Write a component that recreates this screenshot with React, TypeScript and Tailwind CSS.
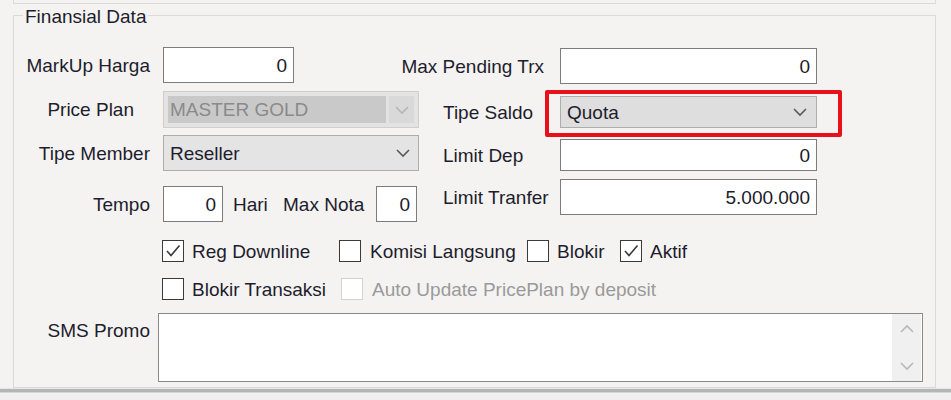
import React from "react";

const Chevron = ({ color = "#5a5a5a", up = false }: { color?: string; up?: boolean }) => (
  <svg width="16" height="10" viewBox="0 0 16 10" fill="none">
    <polyline
      points={up ? "2,8 8,2 14,8" : "2,2 8,8 14,2"}
      stroke={color}
      strokeWidth="1.6"
      fill="none"
    />
  </svg>
);

const Input = ({ w, h = 36, value }: { w: string; h?: number; value: string }) => (
  <div
    className={`${w} bg-white border-[1.5px] border-[#7c7c7c] flex items-center justify-end pr-[6px] text-[#1b1b2b]`}
    style={{ height: h }}
  >
    {value}
  </div>
);

const Check = ({ checked = false, disabled = false }: { checked?: boolean; disabled?: boolean }) => (
  <div
    className={`w-[22px] h-[22px] shrink-0 bg-white border-[1.5px] flex items-center justify-center ${
      disabled ? "border-[#d2d2d2]" : "border-[#3a3a3a]"
    }`}
  >
    {checked && (
      <svg width="16" height="14" viewBox="0 0 16 14" fill="none">
        <polyline points="2,7 6,11.5 14.5,1.5" stroke="#3a3a3a" strokeWidth="1.6" fill="none" />
      </svg>
    )}
  </div>
);

export default function App() {
  return (
    <div
      className="w-[951px] h-[400px] bg-[#f4f3f1] overflow-hidden flex flex-col text-[19px] leading-[21px] text-[#1d1d2d]"
      style={{ fontFamily: '"Liberation Sans", Arial, sans-serif' }}
    >
      {/* bottom of previous group */}
      <div className="ml-[13px] w-[923px] h-[4px] border-x border-b border-[#dadada] shrink-0" />

      {/* group box */}
      <div className="relative ml-[13px] mt-[11px] w-[923px] h-[373px] border border-[#dadada] shrink-0">
        <div className="absolute left-[9px] -top-[10px] px-[2px] bg-[#f4f3f1]">Finansial Data</div>

        <div className="flex pt-[31px]">
          {/* left column */}
          <div className="w-[405px] flex flex-col">
            <div className="flex items-center h-[36px]">
              <div className="w-[136px] text-right whitespace-nowrap">MarkUp Harga</div>
              <div className="ml-[13px]">
                <Input w="w-[131px]" value="0" />
              </div>
            </div>
            <div className="flex items-center h-[37px] mt-[8px]">
              <div className="w-[136px] text-right pr-[16px]">Price Plan</div>
              <div className="ml-[13px] w-[256px] h-[37px] border border-[#cfcfcf] bg-[#e3e3e3] flex items-center p-[4px]">
                <div className="h-full w-[218px] bg-[#c9c9c9] flex items-center pl-[2px] text-[#8a8a8a]">
                  MASTER GOLD
                </div>
                <div className="h-full flex-1 ml-[3px] bg-[#d9d9d9] flex items-center justify-center">
                  <Chevron color="#b5b5b5" />
                </div>
              </div>
            </div>
            <div className="flex items-center h-[36px] mt-[7px]">
              <div className="w-[136px] text-right whitespace-nowrap">Tipe Member</div>
              <div className="ml-[13px] w-[256px] h-[36px] border border-[#adadad] bg-[#e4e4e4] flex items-center justify-between pl-[6px] pr-[7px]">
                <span>Reseller</span>
                <Chevron />
              </div>
            </div>
            <div className="flex items-center h-[36px] mt-[15px]">
              <div className="w-[136px] text-right">Tempo</div>
              <div className="ml-[13px]">
                <Input w="w-[60px]" value="0" />
              </div>
              <div className="ml-[10px] w-[50px]">Hari</div>
              <div className="w-[93px] whitespace-nowrap">Max Nota</div>
              <Input w="w-[41px]" value="0" />
            </div>
          </div>

          {/* right column */}
          <div className="flex flex-col">
            <div className="flex items-center h-[36px] mt-[1px] -ml-[30px]">
              <div className="w-[171px] text-right pr-[16px] whitespace-nowrap">Max Pending Trx</div>
              <Input w="w-[257px]" value="0" />
            </div>
            <div className="flex items-center h-[32px] mt-[12px]">
              <div className="w-[141px] pl-[24px]">Tipe Saldo</div>
              <div className="relative w-[257px] h-[32px] border border-[#adadad] bg-[#dedede] flex items-center justify-between pl-[6px] pr-[8px]">
                <span>Quota</span>
                <Chevron />
                <div className="absolute -left-[16px] -right-[26px] -top-[7px] -bottom-[10px] border-[4px] border-[#e8101a] rounded-[2px]" />
              </div>
            </div>
            <div className="flex items-center h-[32px] mt-[11px]">
              <div className="w-[141px] pl-[24px]">Limit Dep</div>
              <Input w="w-[257px]" h={32} value="0" />
            </div>
            <div className="flex items-center h-[36px] mt-[8px]">
              <div className="w-[141px] pl-[24px] whitespace-nowrap">Limit Tranfer</div>
              <Input w="w-[257px]" value="5.000.000" />
            </div>
          </div>
        </div>

        {/* checkboxes */}
        <div className="flex items-center h-[22px] mt-[18px] pl-[148px]">
          <div className="w-[177px] flex items-center gap-[8px]">
            <Check checked />
            <span>Reg Downline</span>
          </div>
          <div className="w-[188px] flex items-center gap-[9px]">
            <Check />
            <span>Komisi Langsung</span>
          </div>
          <div className="w-[93px] flex items-center gap-[8px]">
            <Check />
            <span>Blokir</span>
          </div>
          <div className="flex items-center gap-[8px]">
            <Check checked />
            <span>Aktif</span>
          </div>
        </div>
        <div className="flex items-center h-[22px] mt-[16px] pl-[148px]">
          <div className="w-[179px] flex items-center gap-[8px]">
            <Check />
            <span>Blokir Transaksi</span>
          </div>
          <div className="flex items-center gap-[9px] text-[#9a9a9a]">
            <Check disabled />
            <span>Auto Update PricePlan by deposit</span>
          </div>
        </div>

        {/* SMS promo */}
        <div className="flex mt-[13px]">
          <div className="w-[136px] text-right pt-[7px]">SMS Promo</div>
          <div className="ml-[8px] w-[765px] h-[69px] bg-white border-[1.5px] border-[#8a8a8a] flex justify-end">
            <div className="w-[29px] h-full bg-[#f0f0f0] flex flex-col items-center justify-between py-[10px] mr-[1px]">
              <Chevron color="#b8b8b8" up />
              <Chevron color="#b8b8b8" />
            </div>
          </div>
        </div>
      </div>

      {/* bottom band */}
      <div className="h-[1px] bg-[#e6e6e6] shrink-0" />
      <div className="h-[3px] bg-[#b2b6b6] shrink-0" />
      <div className="h-[1px] bg-[#d2d6d6] shrink-0" />
      <div className="flex-1 bg-[#f0f0f0]" />
    </div>
  );
}
